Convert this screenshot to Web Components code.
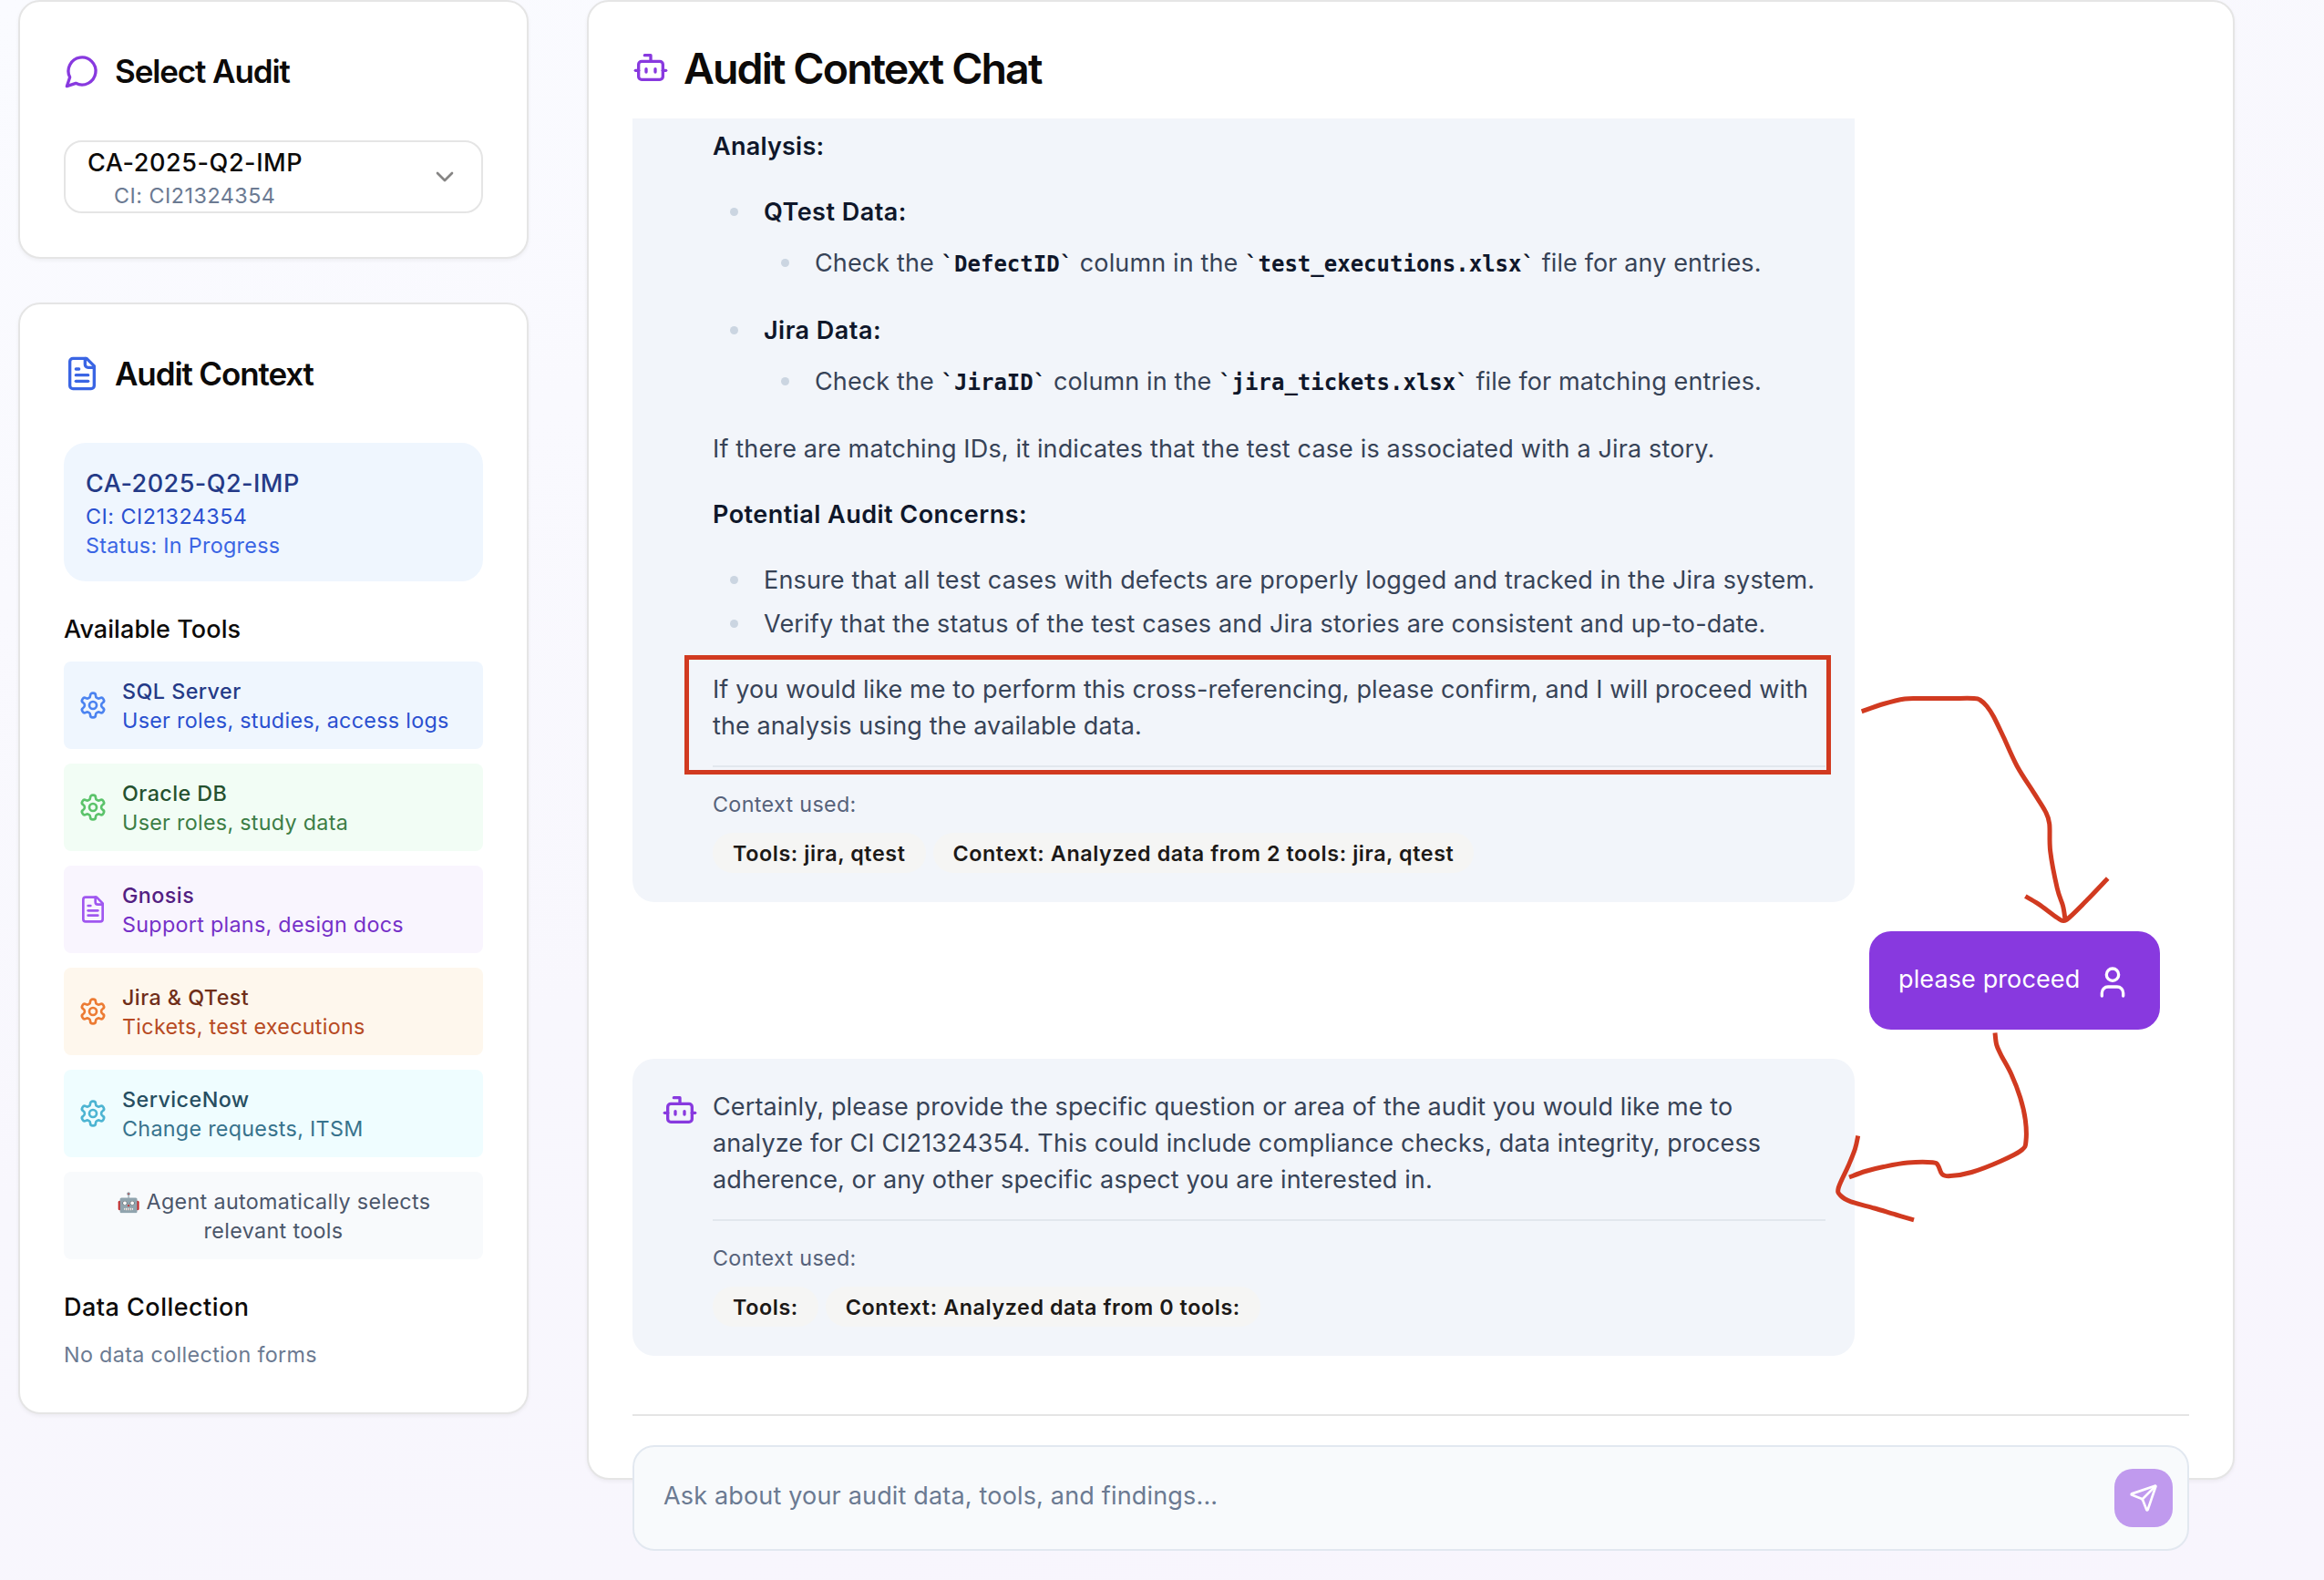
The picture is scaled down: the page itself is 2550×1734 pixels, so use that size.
<!DOCTYPE html>
<html lang="en">
<head>
<meta charset="utf-8">
<title>Audit Context Chat</title>
<style>
  html, body { margin: 0; padding: 0; }
  body {
    width: 2550px; height: 1734px; overflow: hidden; position: relative;
    background: linear-gradient(160deg, #fafbff 0%, #f8f7fd 50%, #f8f5fd 100%);
    font-family: Inter, "Liberation Sans", sans-serif;
    font-size: 27px; line-height: 40px; color: #0c0a09;
  }
</style>
</head>
<body>
<audit-app></audit-app>

<script>
const ICONS = {
  message: '<path d="M7.9 20A9 9 0 1 0 4 16.1L2 22Z"/>',
  file: '<path d="M15 2H6a2 2 0 0 0-2 2v16a2 2 0 0 0 2 2h12a2 2 0 0 0 2-2V7Z"/><path d="M14 2v4a2 2 0 0 0 2 2h4"/><path d="M10 9H8"/><path d="M16 13H8"/><path d="M16 17H8"/>',
  gear: '<path d="M12.22 2h-.44a2 2 0 0 0-2 2v.18a2 2 0 0 1-1 1.73l-.43.25a2 2 0 0 1-2 0l-.15-.08a2 2 0 0 0-2.73.73l-.22.38a2 2 0 0 0 .73 2.73l.15.1a2 2 0 0 1 1 1.72v.51a2 2 0 0 1-1 1.74l-.15.09a2 2 0 0 0-.73 2.73l.22.38a2 2 0 0 0 2.73.73l.15-.08a2 2 0 0 1 2 0l.43.25a2 2 0 0 1 1 1.73V20a2 2 0 0 0 2 2h.44a2 2 0 0 0 2-2v-.18a2 2 0 0 1 1-1.73l.43-.25a2 2 0 0 1 2 0l.15.08a2 2 0 0 0 2.73-.73l.22-.39a2 2 0 0 0-.73-2.73l-.15-.08a2 2 0 0 1-1-1.74v-.5a2 2 0 0 1 1-1.74l.15-.09a2 2 0 0 0 .73-2.73l-.22-.38a2 2 0 0 0-2.73-.73l-.15.08a2 2 0 0 1-2 0l-.43-.25a2 2 0 0 1-1-1.73V4a2 2 0 0 0-2-2z"/><circle cx="12" cy="12" r="3"/>',
  bot: '<path d="M12 8V4H8"/><rect width="16" height="12" x="4" y="8" rx="2"/><path d="M2 14h2"/><path d="M20 14h2"/><path d="M15 13v2"/><path d="M9 13v2"/>',
  user: '<path d="M19 21v-2a4 4 0 0 0-4-4H9a4 4 0 0 0-4 4v2"/><circle cx="12" cy="7" r="4"/>',
  chevron: '<path d="m6 9 6 6 6-6"/>',
  send: '<path d="M14.536 21.686a.5.5 0 0 0 .937-.024l6.5-19a.496.496 0 0 0-.635-.635l-19 6.5a.5.5 0 0 0-.024.937l7.93 3.18a2 2 0 0 1 1.112 1.11z"/><path d="m21.854 2.147-10.94 10.939"/>'
};

class Base extends HTMLElement {
  connectedCallback() {
    if (!this.shadowRoot) this.attachShadow({ mode: 'open' }).innerHTML = this.render();
  }
}

class UiIcon extends Base {
  render() {
    const s = this.getAttribute('size') || 40;
    return `<style>:host{display:block;flex:none;width:${s}px;height:${s}px}svg{display:block}</style>
      <svg width="${s}" height="${s}" viewBox="0 0 24 24" fill="none" stroke="currentColor" stroke-width="2" stroke-linecap="round" stroke-linejoin="round">${ICONS[this.getAttribute('name')]}</svg>`;
  }
}
customElements.define('ui-icon', UiIcon);

class UiCard extends Base {
  render() {
    return `<style>
      :host{display:flex;flex-direction:column;box-sizing:border-box;background:#fff;border:2px solid #e5e5e5;border-radius:24px;padding:48px;box-shadow:0 2px 4px rgba(0,0,0,.05)}
    </style><slot></slot>`;
  }
}
customElements.define('ui-card', UiCard);

class CardTitle extends Base {
  render() {
    return `<style>
      :host{display:flex;align-items:center;gap:16px;height:56px;margin-bottom:48px}
      h3{margin:0;font-size:35px;font-weight:600;line-height:56px;letter-spacing:-1.12px}
    </style>
    <ui-icon name="${this.getAttribute('icon')}" style="color:${this.getAttribute('tint')}"></ui-icon><h3><slot></slot></h3>`;
  }
}
customElements.define('card-title', CardTitle);

class AuditSelect extends Base {
  render() {
    return `<style>
      :host{display:flex;align-items:center;justify-content:space-between;box-sizing:border-box;height:80px;border:2px solid #e5e5e5;border-radius:20px;padding:0 24px}
      .val{padding-top:2px}
      .id{letter-spacing:.57px;font-weight:450}
      .ci{font-size:23.3px;line-height:32px;letter-spacing:.5px;color:#6b7a92;padding-left:29px}
      ui-icon{color:#868584}
    </style>
    <div class="val"><div class="id">CA-2025-Q2-IMP</div><div class="ci">CI: CI21324354</div></div>
    <ui-icon name="chevron" size="32"></ui-icon>`;
  }
}
customElements.define('audit-select', AuditSelect);

class AuditInfo extends Base {
  render() {
    return `<style>
      :host{display:block;background:#eff6fe;border-radius:24px;padding:25px 24px 23px;margin-bottom:32px}
      .id{font-weight:500;letter-spacing:.47px;color:#243a87}
      .ci,.st{font-size:23.3px;line-height:32px}
      .ci{letter-spacing:.5px;color:#2a50d0}
      .st{letter-spacing:.32px;color:#3a65e4}
    </style>
    <div class="id">CA-2025-Q2-IMP</div><div class="ci">CI: CI21324354</div><div class="st">Status: In Progress</div>`;
  }
}
customElements.define('audit-info', AuditInfo);

class SectionLabel extends Base {
  render() {
    return `<style>:host{display:block;font-weight:500;letter-spacing:var(--ls,.08px);padding-top:1px;margin-bottom:15px}</style><slot></slot>`;
  }
}
customElements.define('section-label', SectionLabel);

class ToolRow extends Base {
  render() {
    const a = n => this.getAttribute(n);
    return `<style>
      :host{display:flex;align-items:center;gap:16px;height:96px;box-sizing:border-box;padding:0 16px;border-radius:8px;background:${a('bg')};font-size:23.3px;line-height:32px}
      ui-icon{color:${a('tint')}}
      .text{padding-top:2px}
      .n{font-weight:500;letter-spacing:.45px;color:${a('dark')}}
      .d{letter-spacing:.3px;color:${a('mid')}}
    </style>
    <ui-icon name="${a('icon') || 'gear'}" size="32"></ui-icon>
    <div class="text"><div class="n">${a('name').replace('&', '&amp;')}</div><div class="d"><slot></slot></div></div>`;
  }
}
customElements.define('tool-row', ToolRow);

class AuditSidebar extends Base {
  render() {
    return `<style>
      :host{display:flex;flex-direction:column;gap:48px;width:560px;flex:none}
      .tools{display:flex;flex-direction:column;gap:16px;margin-bottom:32px}
      .note{height:96px;box-sizing:border-box;padding:17px 40px 15px;border-radius:8px;background:#f8fafc;text-align:center;font-size:23.3px;line-height:32px;letter-spacing:.34px;color:#4b566a}
      .empty{font-size:23.3px;line-height:32px;letter-spacing:.35px;color:#6b7a92;padding-top:1px;margin-bottom:-1px}
      .emoji{font-size:21px;line-height:1;letter-spacing:0}
    </style>
    <ui-card><card-title icon="message" tint="#8839df">Select Audit</card-title><audit-select></audit-select></ui-card>
    <ui-card>
      <card-title icon="file" tint="#3a65e4">Audit Context</card-title>
      <audit-info></audit-info>
      <section-label>Available Tools</section-label>
      <div class="tools">
        <tool-row name="SQL Server" bg="#eff6fe" tint="#4b83f0" dark="#243a87" mid="#2a50d0">User roles, studies, access logs</tool-row>
        <tool-row name="Oracle DB" bg="#f2fdf5" tint="#5bc36a" dark="#25512f" mid="#3c7d45">User roles, study data</tool-row>
        <tool-row name="Gnosis" icon="file" bg="#f9f5fe" tint="#a057f0" dark="#532082" mid="#7530c8">Support plans, design docs</tool-row>
        <tool-row name="Jira &amp; QTest" bg="#fef7ed" tint="#ec7b33" dark="#702e19" mid="#b74a23">Tickets, test executions</tool-row>
        <tool-row name="ServiceNow" bg="#effdff" tint="#4cb4d2" dark="#264e61" mid="#37738d">Change requests, ITSM</tool-row>
        <div class="note"><span class="emoji">🤖</span> Agent automatically selects relevant tools</div>
      </div>
      <section-label style="--ls:.48px">Data Collection</section-label>
      <div class="empty">No data collection forms</div>
    </ui-card>`;
  }
}
customElements.define('audit-sidebar', AuditSidebar);

class ContextTags extends Base {
  render() {
    const tags = this.getAttribute('tags').split('|');
    return `<style>
      :host{display:block;border-top:2px solid #e2e7ed;margin-top:23px;padding-top:25px;font-size:23.3px;line-height:32px}
      .l{letter-spacing:.34px;color:#56627a;margin-bottom:15px}
      .row{display:flex;gap:8px}
      .row span{box-sizing:border-box;height:44px;padding:7px 22px 5px;border-radius:22px;background:#f5f5f4;color:#1c1917;font-weight:600;letter-spacing:.59px;white-space:nowrap}
    </style>
    <div class="l">Context used:</div><div class="row">${tags.map(t => `<span>${t}</span>`).join('')}</div>`;
  }
}
customElements.define('context-tags', ContextTags);

class ChatMessage extends Base {
  render() {
    const user = this.hasAttribute('user'), cut = this.hasAttribute('continued');
    return `<style>
      :host{display:flex;gap:16px;box-sizing:border-box;border-radius:24px;padding:32px;letter-spacing:.115px;
        ${user ? 'align-self:flex-end;margin-right:32px;background:#8839df;color:#fff;width:319px' : 'width:1341px;background:#f2f5fa;color:#374357'}}
      :host([continued]){border-top-left-radius:0;border-top-right-radius:0;padding-top:10px}
      ui-icon,.gap{margin-top:4px;width:40px;flex:none}
      ui-icon{color:${user ? '#fff' : '#8839df'}}
      .body{flex:1;min-width:0;padding-top:1px;white-space:${user ? 'nowrap' : 'normal'}}
    </style>
    ${user ? '' : cut ? '<div class="gap"></div>' : '<ui-icon name="bot"></ui-icon>'}
    <div class="body"><slot></slot></div>
    ${user ? '<ui-icon name="user"></ui-icon>' : ''}`;
  }
}
customElements.define('chat-message', ChatMessage);

class AnalysisText extends Base {
  render() {
    return `<style>
      :host{display:block;letter-spacing:.15px}
      p{margin:32px 0 0}
      p.first{margin:0}
      ul{list-style:none;margin:32px 0 0;padding:0 0 0 56px}
      ul ul{margin:16px 0 0;letter-spacing:.12px}
      li{display:block}
      li.group + li.group{margin-top:34px}
      .group.last{margin-bottom:34px}
      li.item + li.item{margin-top:8px}
      .dot{display:inline-block;width:9px;height:9px;border-radius:50%;background:#cbd5e1;margin:0 28.5px 4.5px -37.5px;vertical-align:middle}
      b{font-weight:600;color:#0f172a;letter-spacing:.47px}
      code{font-family:"DejaVu Sans Mono",monospace;font-size:24px;font-weight:700;color:#0f172a;letter-spacing:0;line-height:1}
    </style>
    <p class="first"><b style="letter-spacing:.24px">Analysis:</b></p>
    <ul>
      <li class="group"><span class="dot"></span><b>QTest Data:</b>
        <ul><li><span class="dot"></span>Check the <code>\`DefectID\`</code> column in the <code>\`test_executions.xlsx\`</code> file for any entries.</li></ul></li>
      <li class="group last"><span class="dot"></span><b>Jira Data:</b>
        <ul><li><span class="dot"></span>Check the <code>\`JiraID\`</code> column in the <code>\`jira_tickets.xlsx\`</code> file for matching entries.</li></ul></li>
    </ul>
    <p>If there are matching IDs, it indicates that the test case is associated with a Jira story.</p>
    <p><b>Potential Audit Concerns:</b></p>
    <ul>
      <li class="item"><span class="dot"></span>Ensure that all test cases with defects are properly logged and tracked in the Jira system.</li>
      <li class="item" style="letter-spacing:.17px"><span class="dot"></span>Verify that the status of the test cases and Jira stories are consistent and up-to-date.</li>
    </ul>
    <p style="letter-spacing:.1px">If you would like me to perform this cross-referencing, please confirm, and I will proceed with the analysis using the available data.</p>`;
  }
}
customElements.define('analysis-text', AnalysisText);

class ChatInput extends Base {
  render() {
    return `<style>
      :host{display:flex;align-items:center;justify-content:space-between;box-sizing:border-box;height:116px;border:2px solid #e2e8f0;border-radius:24px;background:#f8fafc;padding:0 16px 0 32px}
      .ph{color:#6b7a92;letter-spacing:.17px;padding-bottom:4px}
      .send{display:flex;align-items:center;justify-content:center;width:64px;height:64px;border-radius:20px;background:#c09aee;color:#fff}
    </style>
    <div class="ph">Ask about your audit data, tools, and findings...</div>
    <div class="send"><ui-icon name="send" size="32"></ui-icon></div>`;
  }
}
customElements.define('chat-input', ChatInput);

class ChatPanel extends Base {
  render() {
    return `<style>
      :host{display:block;width:1808px;flex:none}
      ui-card{height:1624px;padding:0 48px}
      header{display:flex;align-items:center;gap:16px;height:128px;flex:none;box-sizing:border-box;padding-bottom:18px;padding-top:34px}
      header ui-icon{color:#8839df}
      h2{margin:2px 0 0;font-size:46.5px;line-height:64px;font-weight:600;letter-spacing:-1.88px}
      .list{display:flex;flex-direction:column;gap:32px;margin-bottom:64px}
      .foot{border-top:2px solid #e5e5e5;padding-top:32px}
    </style>
    <ui-card>
      <header><ui-icon name="bot"></ui-icon><h2>Audit Context Chat</h2></header>
      <div class="list">
        <chat-message continued><analysis-text></analysis-text><context-tags tags="Tools: jira, qtest|Context: Analyzed data from 2 tools: jira, qtest"></context-tags></chat-message>
        <chat-message user>please proceed</chat-message>
        <chat-message>Certainly, please provide the specific question or area of the audit you would like me to analyze for CI CI21324354. This could include compliance checks, data integrity, process adherence, or any other specific aspect you are interested in.<context-tags tags="Tools:|Context: Analyzed data from 0 tools:"></context-tags></chat-message>
      </div>
      <div class="foot"><chat-input></chat-input></div>
    </ui-card>`;
  }
}
customElements.define('chat-panel', ChatPanel);

/* Hand-drawn markup that floats over the page: a frame and two arrows. */
class MarkupLayer extends Base {
  smooth(p) {
    let d = `M${p[0]}`;
    for (let i = 0; i < p.length - 1; i++) {
      const a = p[i - 1] || p[i], b = p[i], c = p[i + 1], e = p[i + 2] || c;
      d += `C${b[0] + (c[0] - a[0]) / 6} ${b[1] + (c[1] - a[1]) / 6} ${c[0] - (e[0] - b[0]) / 6} ${c[1] - (e[1] - b[1]) / 6} ${c[0]} ${c[1]}`;
    }
    return d;
  }
  render() {
    const lines = [
      [[2042.7,780.8],[2066.7,772.5],[2090,767],[2108,766.5],[2140,766.5],[2166,766.5],[2173,768.5],[2180,775],[2187.5,786.5],[2198.3,808.8],[2213.3,841],[2231.7,870.2],[2244,890],[2248.7,904],[2249.7,934.3],[2257.3,975],[2263.5,994],[2266,1009]],
      [[2222.3,983.7],[2236.7,992.2],[2257,1007],[2264,1010.6],[2271,1006.5],[2290,987.8],[2312.7,964]],
      [[2189,1133.5],[2190.7,1146.5],[2195.5,1157.6],[2206.7,1178.5],[2216.7,1204.5],[2222.3,1229],[2223,1252],[2218.5,1262],[2196,1274],[2163.3,1286.5],[2140,1290.6],[2131,1288.6],[2126.5,1279],[2120.7,1275.7],[2093.3,1276],[2066.7,1280.5],[2046.7,1285.5],[2029,1292]],
      [[2038.7,1246.5],[2035.5,1260.8],[2028.3,1279],[2017.3,1303.5],[2019.5,1312],[2031,1318.8],[2056.7,1326],[2080,1333],[2100,1338.8]]
    ];
    return `<style>
      :host{position:absolute;inset:0;pointer-events:none}
      svg{display:block}
    </style>
    <svg width="2550" height="1734" viewBox="0 0 2550 1734" fill="none" stroke="#d13a20" stroke-width="5">
      <rect x="753.5" y="721.5" width="1253" height="126"/>
      ${lines.map(l => `<path d="${this.smooth(l)}"/>`).join('')}
    </svg>`;
  }
}
customElements.define('markup-layer', MarkupLayer);

class AuditApp extends Base {
  render() {
    return `<style>:host{display:flex;align-items:flex-start;gap:64px;padding-left:20px}</style>
      <audit-sidebar></audit-sidebar><chat-panel></chat-panel><markup-layer></markup-layer>`;
  }
}
customElements.define('audit-app', AuditApp);
</script>
</body>
</html>
